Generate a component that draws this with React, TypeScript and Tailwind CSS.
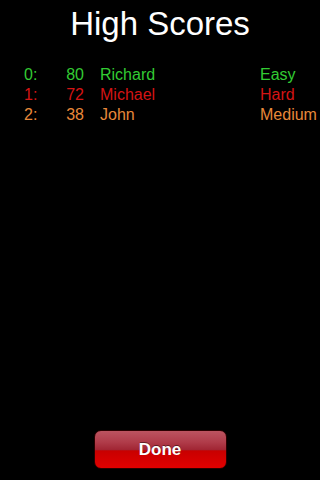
import React from "react";

const rows = [
  { rank: "0:", score: "80", name: "Richard", level: "Easy", color: "text-[#33cc33]" },
  { rank: "1:", score: "72", name: "Michael", level: "Hard", color: "text-[#d41414]" },
  { rank: "2:", score: "38", name: "John", level: "Medium", color: "text-[#e8883a]" },
];

export default function App() {
  return (
    <div
      className="w-[320px] h-[480px] bg-black flex flex-col"
      style={{ fontFamily: '"Liberation Sans", Arial, sans-serif' }}
    >
      <h1 className="pt-[7px] text-center text-white text-[33px] leading-none">High Scores</h1>
      <div className="mt-[25px] pl-[24px] grid grid-cols-[36px_24px_176px_1fr] text-[16px] leading-[20px]">
        {rows.map((r) => (
          <React.Fragment key={r.rank}>
            <div className={r.color}>{r.rank}</div>
            <div className={`${r.color} text-right`}>{r.score}</div>
            <div className={`${r.color} pl-4`}>{r.name}</div>
            <div className={r.color}>{r.level}</div>
          </React.Fragment>
        ))}
      </div>
      <div className="flex-1" />
      <div className="flex justify-center mb-[11px]">
        <button className="w-[133px] h-[39px] rounded-[7px] border border-[#2a0000] bg-[linear-gradient(to_bottom,#bc5460_0%,#b03c4a_30%,#a02432_52%,#c80000_53%,#e20000_100%)] text-white font-bold text-[17px] leading-none [text-shadow:0_-1px_0_rgba(0,0,0,0.45)]">
          Done
        </button>
      </div>
    </div>
  );
}
